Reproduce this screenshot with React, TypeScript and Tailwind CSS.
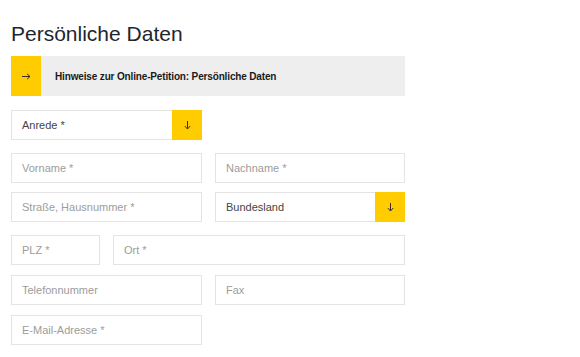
import React from "react";

const font = { fontFamily: '"Liberation Sans", Arial, sans-serif' };

function ArrowRight() {
  return (
    <svg width="9" height="7" viewBox="0 0 9 7" fill="none" stroke="#3a3020" strokeWidth="1">
      <path d="M0 3.5H8M5 0.8L8 3.5L5 6.2" />
    </svg>
  );
}

function ArrowDown() {
  return (
    <svg width="7" height="9" viewBox="0 0 7 9" fill="none" stroke="#3a3020" strokeWidth="1">
      <path d="M3.5 0V8M0.8 5L3.5 8L6.2 5" />
    </svg>
  );
}

function Input({ label, w }: { label: string; w: string }) {
  return (
    <div
      className={`${w} h-[30px] border border-[#e4e4e4] bg-white flex items-center pl-[10px] text-[11px] text-[#9c9c9c] shrink-0`}
    >
      {label}
    </div>
  );
}

function Select({ label, w }: { label: string; w: string }) {
  return (
    <div className={`${w} h-[30px] flex shrink-0`}>
      <div className="flex-1 h-full border border-r-0 border-[#e4e4e4] bg-white flex items-center pl-[10px] text-[11px] text-[#444]">
        {label}
      </div>
      <div className="w-[30px] h-full bg-[#ffcc00] flex items-center justify-center">
        <ArrowDown />
      </div>
    </div>
  );
}

export default function App() {
  return (
    <div className="w-[580px] h-[357px] bg-white overflow-hidden" style={font}>
      <div className="pl-[11px] flex flex-col">
        <h1 className="mt-[22px] text-[21px] leading-[24px] text-[#1e272e] font-normal">
          Persönliche Daten
        </h1>
        <div className="mt-[10px] w-[394px] h-[40px] bg-[#eeeeee] flex items-center">
          <div className="w-[30px] h-full bg-[#ffcc00] flex items-center justify-center">
            <ArrowRight />
          </div>
          <div className="ml-[14px] text-[10px] tracking-[-0.15px] font-bold text-[#1a1a1a]">
            Hinweise zur Online-Petition: Persönliche Daten
          </div>
        </div>
        <div className="mt-[14px] flex">
          <Select label="Anrede *" w="w-[191px]" />
        </div>
        <div className="mt-[13px] flex gap-[13px]">
          <Input label="Vorname *" w="w-[191px]" />
          <Input label="Nachname *" w="w-[190px]" />
        </div>
        <div className="mt-[9px] flex gap-[13px]">
          <Input label="Straße, Hausnummer *" w="w-[191px]" />
          <Select label="Bundesland" w="w-[190px]" />
        </div>
        <div className="mt-[13px] flex gap-[13px]">
          <Input label="PLZ *" w="w-[89px]" />
          <Input label="Ort *" w="w-[292px]" />
        </div>
        <div className="mt-[10px] flex gap-[13px]">
          <Input label="Telefonnummer" w="w-[191px]" />
          <Input label="Fax" w="w-[190px]" />
        </div>
        <div className="mt-[10px] flex">
          <Input label="E-Mail-Adresse *" w="w-[191px]" />
        </div>
      </div>
    </div>
  );
}
